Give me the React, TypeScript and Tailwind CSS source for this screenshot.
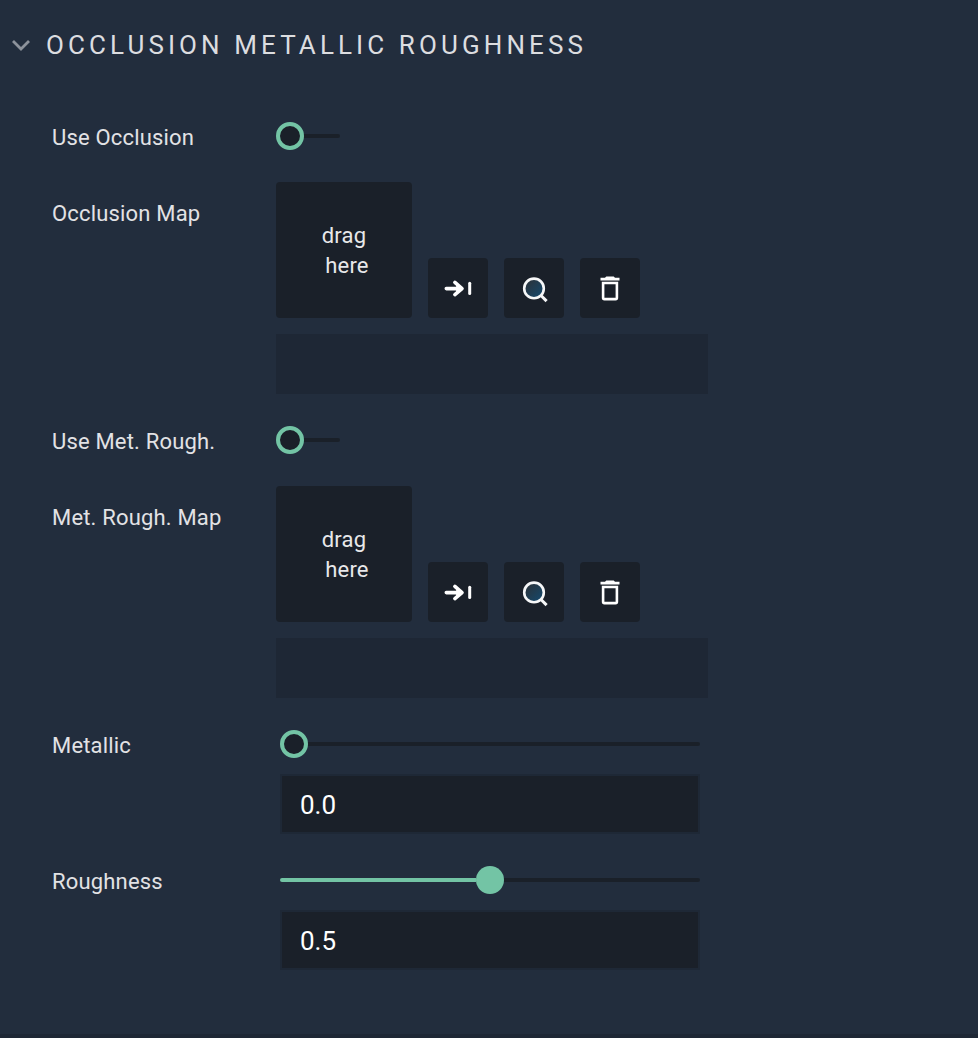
import type { ReactNode } from "react";

function Label({ children }: { children: ReactNode }) {
  return (
    <div className="h-[60px] w-[224px] shrink-0 whitespace-nowrap text-[22px] leading-[63px] tracking-[0.18px] text-[#e2e2e5]">
      {children}
    </div>
  );
}

function Toggle() {
  return (
    <div className="flex h-[60px] w-16 items-center">
      <div className="size-7 shrink-0 rounded-full border-4 border-[#73c4a5] bg-[#1a2029]" />
      <div className="h-1 flex-1 rounded-r-full bg-[#1a2029]" />
    </div>
  );
}

function PickIcon() {
  return (
    <svg className="size-[60px]" viewBox="0 0 60 60" fill="none" stroke="#fff" strokeLinecap="round">
      <path d="M18.3 30.6H33M26.9 24.4L34 30.6L26.9 36.6" strokeWidth="3.6" strokeLinejoin="round" />
      <path d="M29 26.8L35 30.6L29 34.2Z" fill="#fff" strokeWidth="1" />
      <path d="M41.7 25.3V35.5" strokeWidth="3" />
    </svg>
  );
}

function SearchIcon() {
  return (
    <svg className="size-[60px]" viewBox="0 0 60 60" fill="none">
      <defs>
        <linearGradient id="lens" x1="0" y1="0" x2="1" y2="1">
          <stop offset="0.2" stopColor="#283540" />
          <stop offset="0.9" stopColor="#15486b" />
        </linearGradient>
      </defs>
      <circle cx="30" cy="30.4" r="9.8" fill="url(#lens)" stroke="#f6f7f8" strokeWidth="2.6" />
      <path d="M37 37.5L42.6 43.1" stroke="#f6f7f8" strokeWidth="3" />
    </svg>
  );
}

function TrashIcon() {
  return (
    <svg className="size-[60px]" viewBox="0 0 60 60" fill="none">
      <path d="M20.5 19.8H25L26.3 18.4H33.7L35 19.8H39.5V22.4H20.5Z" fill="#fff" />
      <path
        fillRule="evenodd"
        d="M21.8 23.7H38.2V39.8Q38.2 42.4 35.6 42.4H24.4Q21.8 42.4 21.8 39.8ZM24.4 26.3V39.8H35.6V26.3Z"
        fill="#fff"
      />
    </svg>
  );
}

function IconButton({ label, children }: { label: string; children: ReactNode }) {
  return (
    <button aria-label={label} className="size-[60px] rounded bg-[#1a2029]">
      {children}
    </button>
  );
}

function MapPicker() {
  return (
    <div>
      <div className="flex items-end gap-4">
        <div className="size-[136px] rounded bg-[#1a2029] pt-[39px] text-center text-[22px] leading-[30px] tracking-[0.16px] text-[#e8e8ea]">
          <div>drag</div>
          <div className="pl-[6px]">here</div>
        </div>
        <IconButton label="Assign"><PickIcon /></IconButton>
        <IconButton label="Find"><SearchIcon /></IconButton>
        <IconButton label="Delete"><TrashIcon /></IconButton>
      </div>
      <div className="mt-4 h-[60px] w-[432px] bg-[#1e2735]" />
    </div>
  );
}

function NumberSlider({ value, text }: { value: number; text: string }) {
  const active = value > 0;
  return (
    <div className="ml-1 w-[420px]">
      <div className="flex h-[60px] items-center">
        <div className="h-1 rounded-l-full bg-[#73c4a5]" style={{ width: `calc((100% - 28px) * ${value})` }} />
        <div className={active ? "size-7 shrink-0 rounded-full bg-[#73c4a5]" : "size-7 shrink-0 rounded-full border-4 border-[#73c4a5] bg-[#1a2029]"} />
        <div className="h-1 flex-1 rounded-r-full bg-[#1a2029]" />
      </div>
      <div className="h-[60px] border-2 border-[#1e2836] bg-[#1a2029] pl-[18px] text-[26px] leading-[58px] text-white">
        {text}
      </div>
    </div>
  );
}

export default function App() {
  return (
    <div className="flex h-[1038px] w-[978px] flex-col border-b-4 border-[#1e2735] bg-[#222d3d] font-['Roboto',sans-serif]">
      <div className="flex h-[106px] items-start pl-3 pt-[25px]">
        <svg className="mt-[13px] h-4 w-[18px]" viewBox="0 0 18 16" fill="none">
          <path d="M1 3L9 11L17 3" stroke="#8c929b" strokeWidth="2.8" />
        </svg>
        <h2 className="ml-4 whitespace-nowrap text-[26px] font-normal leading-10 tracking-[4.1px] text-[#dcdde0]">
          OCCLUSION METALLIC ROUGHNESS
        </h2>
      </div>
      <div className="flex flex-col gap-4 pl-[52px]">
        <div className="flex"><Label>Use Occlusion</Label><Toggle /></div>
        <div className="flex"><Label>Occlusion Map</Label><MapPicker /></div>
        <div className="flex"><Label>Use Met. Rough.</Label><Toggle /></div>
        <div className="flex"><Label>Met. Rough. Map</Label><MapPicker /></div>
        <div className="flex"><Label>Metallic</Label><NumberSlider value={0} text="0.0" /></div>
        <div className="flex"><Label>Roughness</Label><NumberSlider value={0.5} text="0.5" /></div>
      </div>
    </div>
  );
}
